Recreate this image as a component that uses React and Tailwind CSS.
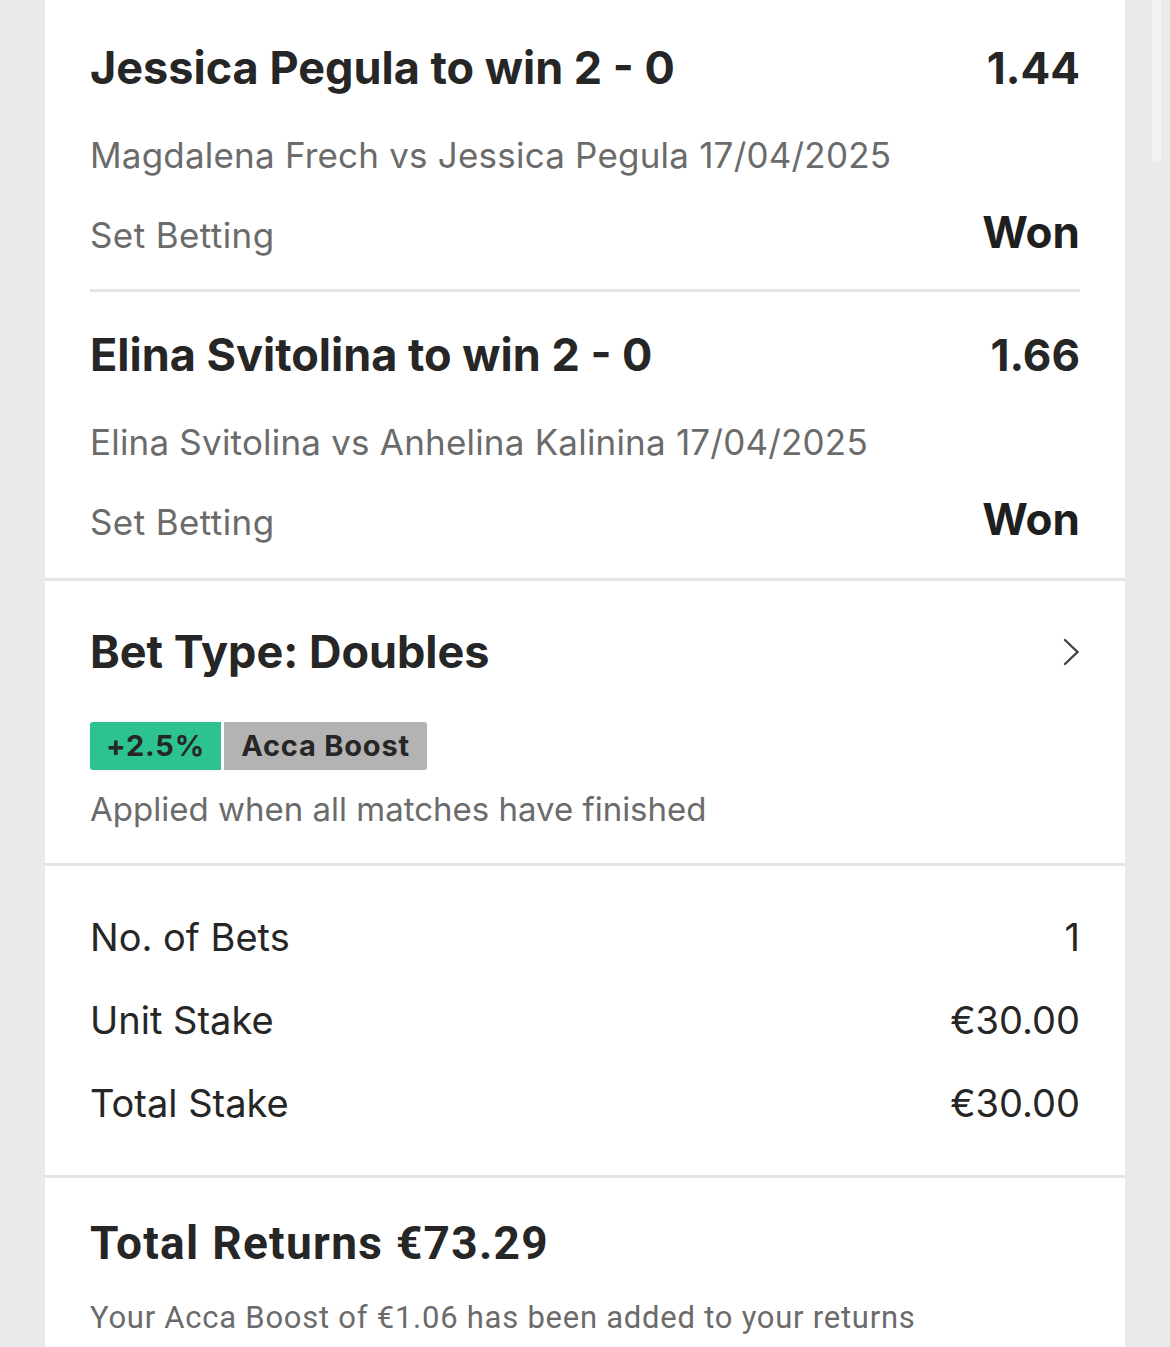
import React from "react";

const inter = { fontFamily: "Inter, 'Noto Sans', sans-serif" };

function Leg({ title, odds, match, pt }) {
  return (
    <div className={`px-[45px] ${pt}`}>
      <div className="flex items-baseline justify-between">
        <div className="text-[45px] leading-[52px] font-bold text-[#262626]">{title}</div>
        <div className="text-[44px] leading-[52px] font-bold text-[#262626]">{odds}</div>
      </div>
      <div className="mt-[41px] text-[35px] leading-[40px] tracking-[0.2px] text-[#6b6b6b]">{match}</div>
      <div className="mt-[31px] flex items-baseline justify-between">
        <div className="text-[35px] leading-[52px] tracking-[0.4px] text-[#6b6b6b]">Set Betting</div>
        <div className="text-[44px] leading-[52px] font-bold text-[#1f1f1f]">Won</div>
      </div>
    </div>
  );
}

function StatRow({ label, value }) {
  return (
    <div className="flex h-[83px] items-center justify-between text-[38px] leading-[83px] text-[#262626]">
      <span>{label}</span>
      <span>{value}</span>
    </div>
  );
}

export default function App() {
  return (
    <div className="relative h-[1347px] w-[1170px] overflow-hidden bg-[#e9eaea]" style={inter}>
      <div className="mx-[45px] h-full bg-white">
        <Leg
          title="Jessica Pegula to win 2 - 0"
          odds="1.44"
          match="Magdalena Frech vs Jessica Pegula 17/04/2025"
          pt="pt-[42px]"
        />
        <div className="mx-[45px] mt-[28px] h-[3px] bg-[#e4e4e4]" />
        <Leg
          title="Elina Svitolina to win 2 - 0"
          odds="1.66"
          match="Elina Svitolina vs Anhelina Kalinina 17/04/2025"
          pt="pt-[37px]"
        />
        <div className="mt-[30px] h-[3px] bg-[#e4e4e4]" />

        <div className="px-[45px] pt-[45px] pb-[35px]">
          <div className="flex items-center justify-between">
            <div className="text-[45px] leading-[52px] font-bold text-[#262626]">Bet Type: Doubles</div>
            <svg width="18" height="28" viewBox="0 0 18 28" className="mr-[-1px]">
              <path d="M2 2 L14.5 14 L2 26" fill="none" stroke="#444" strokeWidth="2.4" strokeLinecap="round" strokeLinejoin="miter" />
            </svg>
          </div>
          <div className="mt-[44px] flex h-[48px] gap-[3px]">
            <div className="flex w-[131px] items-center justify-center rounded-l-[3px] bg-[#2dc391] text-[29px] font-bold tracking-[0.8px] text-[#262626]">
              +2.5%
            </div>
            <div className="flex w-[203px] items-center justify-center rounded-r-[3px] bg-[#b3b3b3] text-[29px] font-bold tracking-[0.8px] text-[#262626]">
              Acca Boost
            </div>
          </div>
          <div className="mt-[20px] text-[33px] leading-[38px] text-[#6b6b6b]">Applied when all matches have finished</div>
        </div>
        <div className="h-[3px] bg-[#e4e4e4]" />

        <div className="px-[45px] pt-[30px] pb-[30px]">
          <StatRow label="No. of Bets" value="1" />
          <StatRow label="Unit Stake" value="€30.00" />
          <StatRow label="Total Stake" value="€30.00" />
        </div>
        <div className="h-[3px] bg-[#e4e4e4]" />

        <div className="px-[45px] pt-[39px]" style={{ fontFamily: "Roboto, 'Liberation Sans', sans-serif" }}>
          <div className="text-[46px] leading-[52px] font-bold tracking-[1.3px] text-[#262626]">Total Returns €73.29</div>
          <div className="mt-[31px] text-[31px] leading-[36px] tracking-[0.75px] text-[#6b6b6b]">
            Your Acca Boost of €1.06 has been added to your returns
          </div>
        </div>
      </div>
      <div className="absolute left-[1152px] top-0 h-[162px] w-[9px] rounded-b-full bg-[#f2f3f3]" />
    </div>
  );
}
